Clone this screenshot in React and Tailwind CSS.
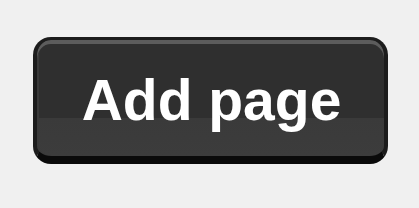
export default function App() {
  return (
    <div className="w-[419px] h-[208px] bg-[#f0f0f0] pt-[37px] pl-[33px]">
      <button
        type="button"
        className="flex items-center justify-center w-[355px] h-[127px] rounded-[18px] border-t-[3px] border-x-4 border-b-8 border-[#1c1c1c] border-b-[#0a0a0a] bg-[linear-gradient(#2f2f2f_0,#2f2f2f_67%,#3a3a3a_67%,#3c3c3c_100%)] shadow-[inset_0_4px_0_#5c5c5c,inset_2px_0_0_#3a3a3a] text-white font-bold text-[57px] leading-none font-['Liberation_Sans',Arial,sans-serif] pt-[4px] pl-[2px]"
      >
        Add page
      </button>
    </div>
  );
}
